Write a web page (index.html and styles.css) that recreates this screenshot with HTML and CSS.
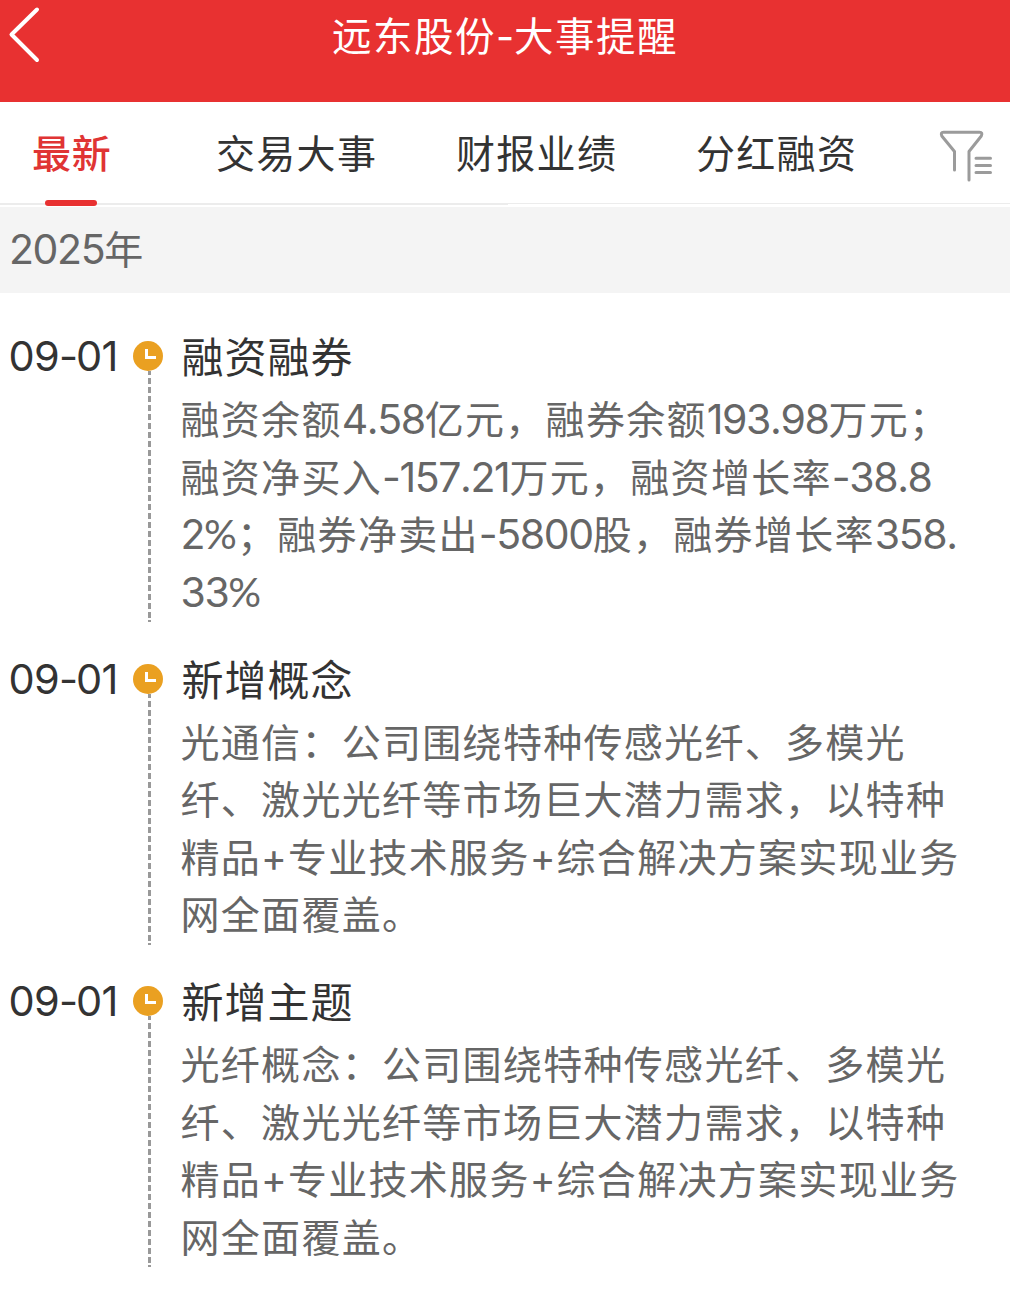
FILE: index.html
```
<!DOCTYPE html>
<html lang="zh-CN">
<head>
    <meta charset="UTF-8">
    <meta name="viewport" content="width=device-width, initial-scale=1.0">
    <title>远东股份-大事提醒</title>
    <link rel="stylesheet" href="styles.css">
</head>
<body>
    <header class="header">
        <svg class="back" viewBox="0 0 44 60" fill="none" stroke="#fff" stroke-width="4" stroke-linecap="round" stroke-linejoin="round">
            <path d="M37 5.5 L11.5 30.5 L37 56"/>
        </svg>
        <h1 class="title">远东股份<span class="dash">-</span>大事提醒</h1>
    </header>

    <nav class="tabs">
        <a class="tab tab-first active">最新</a>
        <a class="tab">交易大事</a>
        <a class="tab">财报业绩</a>
        <a class="tab">分红融资</a>
        <svg class="filter" viewBox="0 0 56 56" fill="none" stroke="#9b9b9b" stroke-width="3" stroke-linecap="round" stroke-linejoin="round">
            <path d="M15.5 43 V24.5 L2.8 9 Q1.3 5.2 4.5 5.2 H40.5 Q44 5.2 42.3 9 L30 24.5 V53"/>
            <path d="M37 31.2 H51.5 M37 38.4 H51.5 M37 45.5 H51.5"/>
        </svg>
    </nav>

    <div class="year"><span class="num">2025</span>年</div>

    <div class="timeline">
        <div class="item">
            <div class="date">09<span class="hyphen">-</span>01</div>
            <div class="axis">
                <svg class="clock" viewBox="0 0 30 30"><circle cx="15" cy="15" r="15" fill="#eaa021"/><path d="M13.5 8 V16.5 H23" fill="none" stroke="#fff" stroke-width="3"/></svg>
                <div class="line"></div>
            </div>
            <div class="content">
                <h2 class="event">融资融券</h2>
                <p class="desc">融资余额<span class="num">4.58</span>亿元，融券余额<span class="num">193.98</span>万元；<br>融资净买入<span class="num">-157.21</span>万元，融资增长率<span class="num">-38.8</span><br><span class="num">2<span class="percent">%</span></span>；融券净卖出<span class="num">-5800</span>股，融券增长率<span class="num">358.</span><br><span class="num">33<span class="percent">%</span></span></p>
            </div>
        </div>

        <div class="item">
            <div class="date">09<span class="hyphen">-</span>01</div>
            <div class="axis">
                <svg class="clock" viewBox="0 0 30 30"><circle cx="15" cy="15" r="15" fill="#eaa021"/><path d="M13.5 8 V16.5 H23" fill="none" stroke="#fff" stroke-width="3"/></svg>
                <div class="line"></div>
            </div>
            <div class="content">
                <h2 class="event">新增概念</h2>
                <p class="desc">光通信：公司围绕特种传感光纤、多模光<br>纤、激光光纤等市场巨大潜力需求，以特种<br>精品<span class="plus">+</span>专业技术服务<span class="plus">+</span>综合解决方案实现业务<br>网全面覆盖。</p>
            </div>
        </div>

        <div class="item">
            <div class="date">09<span class="hyphen">-</span>01</div>
            <div class="axis">
                <svg class="clock" viewBox="0 0 30 30"><circle cx="15" cy="15" r="15" fill="#eaa021"/><path d="M13.5 8 V16.5 H23" fill="none" stroke="#fff" stroke-width="3"/></svg>
                <div class="line"></div>
            </div>
            <div class="content">
                <h2 class="event">新增主题</h2>
                <p class="desc">光纤概念：公司围绕特种传感光纤、多模光<br>纤、激光光纤等市场巨大潜力需求，以特种<br>精品<span class="plus">+</span>专业技术服务<span class="plus">+</span>综合解决方案实现业务<br>网全面覆盖。</p>
            </div>
        </div>
    </div>
</body>
</html>
```
FILE: styles.css
```
* {
    box-sizing: border-box;
    margin: 0;
    padding: 0;
}

body {
    font-family: "Noto Sans CJK SC", sans-serif;
    font-size: 39px;
    color: #333;
    background-color: #fff;
    text-spacing-trim: space-all;
    overflow: hidden;
}

.header {
    display: grid;
    grid-template-columns: 44px 1fr 44px;
    height: 102px;
    padding-top: 4px;
    background-color: #e83131;
    color: #fff;
}

.back {
    width: 44px;
    height: 60px;
}

.title {
    font-size: 39.5px;
    font-weight: 400;
    line-height: 59px;
    letter-spacing: 1.5px;
    text-align: center;
}

.dash {
    display: inline-block;
    width: 18px;
    font-family: Inter, sans-serif;
}

.tabs {
    display: flex;
    height: 105px;
    padding-left: 32px;
    background:
        linear-gradient(#ececec, #ececec) 0 101px / 508px 2px no-repeat,
        linear-gradient(#ececec, #ececec) 0 101px / 100% 1px no-repeat;
}

.tab {
    width: 240px;
    font-size: 39px;
    line-height: 98px;
    letter-spacing: 1.3px;
    white-space: nowrap;
}

.tab-first {
    width: 184px;
}

.active {
    color: #e03434;
    font-weight: 500;
    letter-spacing: 0.8px;
}

.active::after {
    content: "";
    display: block;
    width: 52px;
    height: 6px;
    margin-left: 13px;
    border-radius: 3px;
    background-color: #e83131;
}

.filter {
    width: 56px;
    height: 56px;
    margin: 25px 0 0 2.5px;
}

.year {
    height: 86px;
    padding-left: 9px;
    line-height: 81px;
    color: #666;
    background-color: #f4f4f4;
}

.num {
    font-family: Inter, "Noto Sans CJK SC", sans-serif;
    font-size: 41px;
    line-height: 1;
    letter-spacing: -1.4px;
    font-kerning: none;
}

.timeline {
    padding-top: 30px;
}

.item {
    display: flex;
    height: 322.5px;
}

.date {
    width: 133px;
    padding-left: 8.5px;
    font-family: Inter, sans-serif;
    font-size: 41.5px;
    line-height: 66px;
    letter-spacing: -0.7px;
    white-space: nowrap;
}

.hyphen {
    display: inline-block;
    width: 17px;
}

.axis {
    width: 47px;
    padding-top: 18px;
}

.clock {
    display: block;
    width: 30px;
    height: 30px;
}

.line {
    width: 3px;
    height: 251px;
    margin-left: 15px;
    background: repeating-linear-gradient(to bottom, #999 0 6px, #fff 6px 9px);
    background-position: 0 -2px;
}

.event {
    padding-left: 1.5px;
    font-size: 42px;
    font-weight: 400;
    line-height: 63px;
    letter-spacing: 1px;
}

.desc {
    padding: 3px 0 0 0.5px;
    color: #666;
    line-height: 57.6px;
    letter-spacing: 1.3px;
    white-space: nowrap;
}

.percent {
    font-family: Lato, sans-serif;
    letter-spacing: 0;
}

.plus {
    font-family: Inter, sans-serif;
    line-height: 1;
    letter-spacing: 1px;
}
```
